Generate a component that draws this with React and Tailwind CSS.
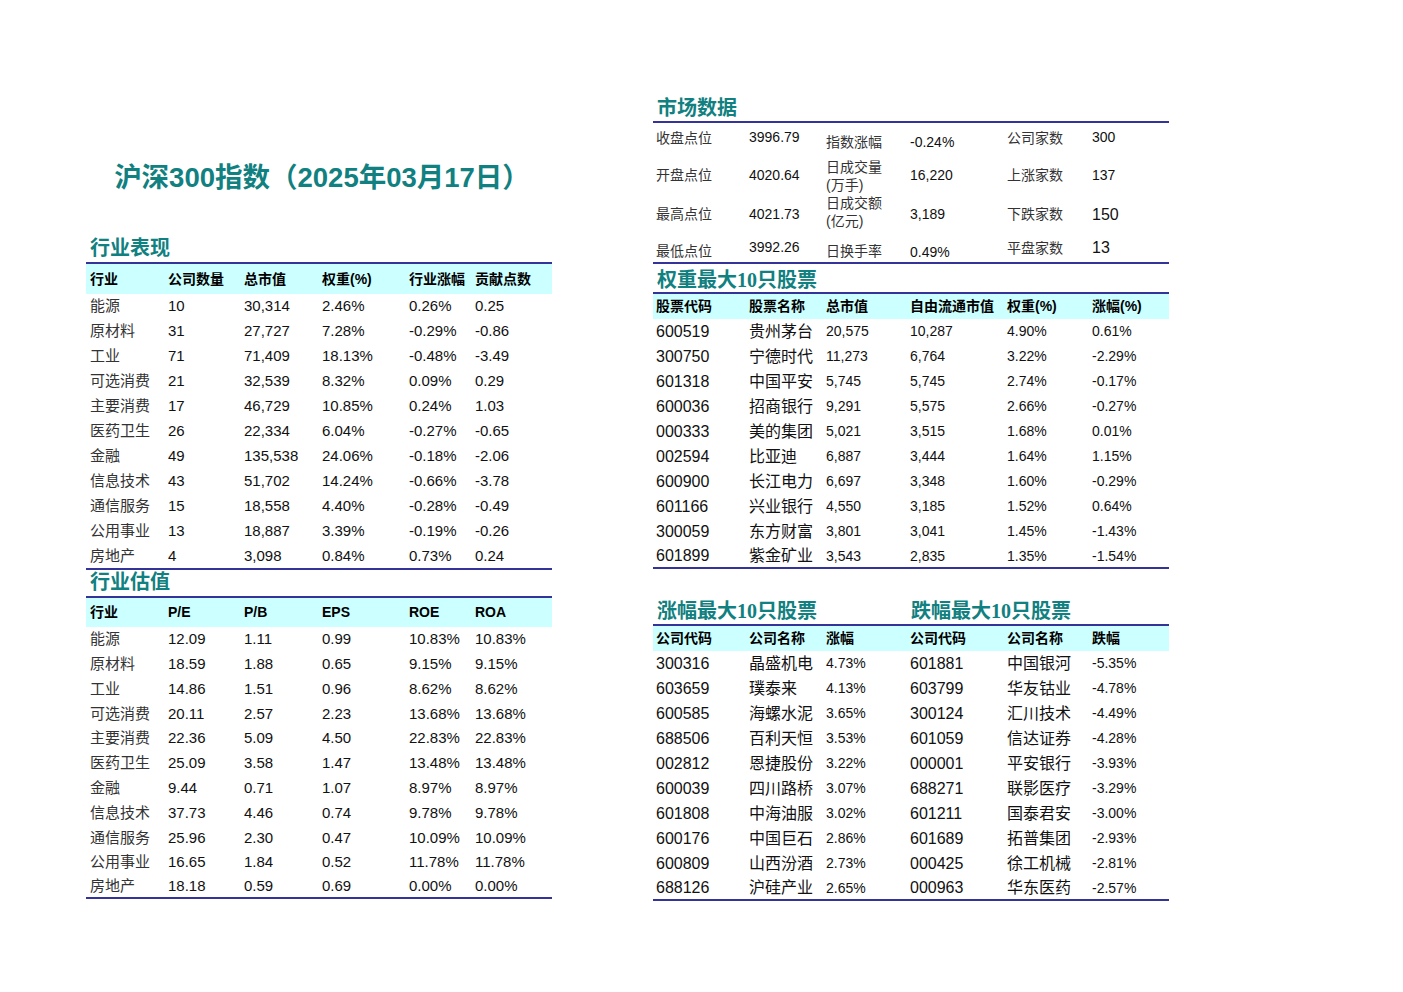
const sans = "font-['Liberation_Sans','Noto_Sans_CJK_SC',sans-serif]";
const head = "font-['Liberation_Serif','Noto_Sans_CJK_SC',serif] font-bold text-[20px] leading-[24px] text-[#108080]";

const LEFT_COLS = "grid grid-cols-[78px_76px_78px_87px_66px_1fr] pl-[4px]";
const RIGHT_COLS = "grid grid-cols-[93px_77px_84px_97px_85px_1fr] pl-[3px]";

const perf = [
  ["能源", "10", "30,314", "2.46%", "0.26%", "0.25"],
  ["原材料", "31", "27,727", "7.28%", "-0.29%", "-0.86"],
  ["工业", "71", "71,409", "18.13%", "-0.48%", "-3.49"],
  ["可选消费", "21", "32,539", "8.32%", "0.09%", "0.29"],
  ["主要消费", "17", "46,729", "10.85%", "0.24%", "1.03"],
  ["医药卫生", "26", "22,334", "6.04%", "-0.27%", "-0.65"],
  ["金融", "49", "135,538", "24.06%", "-0.18%", "-2.06"],
  ["信息技术", "43", "51,702", "14.24%", "-0.66%", "-3.78"],
  ["通信服务", "15", "18,558", "4.40%", "-0.28%", "-0.49"],
  ["公用事业", "13", "18,887", "3.39%", "-0.19%", "-0.26"],
  ["房地产", "4", "3,098", "0.84%", "0.73%", "0.24"],
];

const valuation = [
  ["能源", "12.09", "1.11", "0.99", "10.83%", "10.83%"],
  ["原材料", "18.59", "1.88", "0.65", "9.15%", "9.15%"],
  ["工业", "14.86", "1.51", "0.96", "8.62%", "8.62%"],
  ["可选消费", "20.11", "2.57", "2.23", "13.68%", "13.68%"],
  ["主要消费", "22.36", "5.09", "4.50", "22.83%", "22.83%"],
  ["医药卫生", "25.09", "3.58", "1.47", "13.48%", "13.48%"],
  ["金融", "9.44", "0.71", "1.07", "8.97%", "8.97%"],
  ["信息技术", "37.73", "4.46", "0.74", "9.78%", "9.78%"],
  ["通信服务", "25.96", "2.30", "0.47", "10.09%", "10.09%"],
  ["公用事业", "16.65", "1.84", "0.52", "11.78%", "11.78%"],
  ["房地产", "18.18", "0.59", "0.69", "0.00%", "0.00%"],
];

const weights = [
  ["600519", "贵州茅台", "20,575", "10,287", "4.90%", "0.61%"],
  ["300750", "宁德时代", "11,273", "6,764", "3.22%", "-2.29%"],
  ["601318", "中国平安", "5,745", "5,745", "2.74%", "-0.17%"],
  ["600036", "招商银行", "9,291", "5,575", "2.66%", "-0.27%"],
  ["000333", "美的集团", "5,021", "3,515", "1.68%", "0.01%"],
  ["002594", "比亚迪", "6,887", "3,444", "1.64%", "1.15%"],
  ["600900", "长江电力", "6,697", "3,348", "1.60%", "-0.29%"],
  ["601166", "兴业银行", "4,550", "3,185", "1.52%", "0.64%"],
  ["300059", "东方财富", "3,801", "3,041", "1.45%", "-1.43%"],
  ["601899", "紫金矿业", "3,543", "2,835", "1.35%", "-1.54%"],
];

const movers = [
  ["300316", "晶盛机电", "4.73%", "601881", "中国银河", "-5.35%"],
  ["603659", "璞泰来", "4.13%", "603799", "华友钴业", "-4.78%"],
  ["600585", "海螺水泥", "3.65%", "300124", "汇川技术", "-4.49%"],
  ["688506", "百利天恒", "3.53%", "601059", "信达证券", "-4.28%"],
  ["002812", "恩捷股份", "3.22%", "000001", "平安银行", "-3.93%"],
  ["600039", "四川路桥", "3.07%", "688271", "联影医疗", "-3.29%"],
  ["601808", "中海油服", "3.02%", "601211", "国泰君安", "-3.00%"],
  ["600176", "中国巨石", "2.86%", "601689", "拓普集团", "-2.93%"],
  ["600809", "山西汾酒", "2.73%", "000425", "徐工机械", "-2.81%"],
  ["688126", "沪硅产业", "2.65%", "000963", "华东医药", "-2.57%"],
];

function LeftTable({ header, rows, headH, rowH, lastH }) {
  return (
    <div>
      <div className={`${LEFT_COLS} ${headH} items-center bg-[#ccffff] text-[14px] font-bold text-black`}>
        {header.map((h) => (
          <span key={h}>{h}</span>
        ))}
      </div>
      {rows.map((r, i) => (
        <div
          key={r[0]}
          className={`${LEFT_COLS} items-center text-[15px] ${
            i === rows.length - 1 ? `${lastH} border-b-2 border-[#333399]` : rowH
          }`}
        >
          {r.map((c, j) => (
            <span key={j} className={j === 0 ? "text-[#333]" : "text-[#111]"}>
              {c}
            </span>
          ))}
        </div>
      ))}
    </div>
  );
}

const market = [
  {
    h: "h-[34px]",
    cells: [
      ["收盘点位", "pb-[4px]"],
      ["3996.79", "pb-[6px]"],
      ["指数涨幅", "pt-[4px]"],
      ["-0.24%", "pt-[4px]"],
      ["公司家数", "pb-[4px]"],
      ["300", "pb-[6px]"],
    ],
  },
  {
    h: "h-[37px]",
    cells: [
      ["开盘点位", ""],
      ["4020.64", ""],
      [["日成交量", "(万手)"], ""],
      ["16,220", ""],
      ["上涨家数", ""],
      ["137", ""],
    ],
  },
  {
    h: "h-[38px]",
    cells: [
      ["最高点位", ""],
      ["4021.73", ""],
      [["日成交额", "(亿元)"], "pb-[5px]"],
      ["3,189", ""],
      ["下跌家数", ""],
      ["150", "text-[16px]"],
    ],
  },
  {
    h: "h-[32px] border-b-2 border-[#333399]",
    cells: [
      ["最低点位", "pt-[8px]"],
      ["3992.26", "pt-[0px]"],
      ["日换手率", "pt-[8px]"],
      ["0.49%", "pt-[10px]"],
      ["平盘家数", "pt-[1px]"],
      ["13", "text-[16px]"],
    ],
  },
];

export default function App() {
  return (
    <div className={`${sans} w-[1403px] h-[992px] bg-white flex pl-[86px] text-[#111]`}>
      {/* left column */}
      <div className="w-[466px] pt-[158px]">
        <div className="h-[40px] flex items-center justify-center pl-[6px] text-[27.5px] font-bold text-[#108080]">
          沪深300指数（2025年03月17日）
        </div>
        <div className="h-[66px] flex items-end border-b-2 border-[#333399] pl-[4px] pb-[2px]">
          <span className={head}>行业表现</span>
        </div>
        <LeftTable
          header={["行业", "公司数量", "总市值", "权重(%)", "行业涨幅", "贡献点数"]}
          rows={perf}
          headH="h-[30px]"
          rowH="h-[25px]"
          lastH="h-[26px]"
        />
        <div className="h-[28px] flex items-end border-b-2 border-[#333399] pl-[4px] pb-[2px]">
          <span className={head}>行业估值</span>
        </div>
        <LeftTable
          header={["行业", "P/E", "P/B", "EPS", "ROE", "ROA"]}
          rows={valuation}
          headH="h-[29px]"
          rowH="h-[24.8px]"
          lastH="h-[24px]"
        />
      </div>

      {/* right column */}
      <div className="w-[516px] ml-[101px] pt-[93px]">
        <div className="h-[30px] flex items-end border-b-2 border-[#333399] pl-[4px] pb-[1px]">
          <span className={head}>市场数据</span>
        </div>
        {market.map((row, i) => (
          <div key={i} className={`${RIGHT_COLS} ${row.h} items-center text-[14px]`}>
            {row.cells.map(([c, cls], j) => (
              <div key={j} className={`${cls} ${j % 2 === 0 ? "text-[#333]" : "text-[#111]"}`}>
                {Array.isArray(c) ? (
                  <div className="leading-[18px]">
                    <div>{c[0]}</div>
                    <div>{c[1]}</div>
                  </div>
                ) : (
                  c
                )}
              </div>
            ))}
          </div>
        ))}

        <div className="h-[30px] flex items-end border-b-2 border-[#333399] pl-[4px] pb-[0px]">
          <span className={head}>权重最大10只股票</span>
        </div>
        <div className={`${RIGHT_COLS} h-[25px] items-center bg-[#ccffff] text-[14px] font-bold text-black`}>
          {["股票代码", "股票名称", "总市值", "自由流通市值", "权重(%)", "涨幅(%)"].map((h) => (
            <span key={h}>{h}</span>
          ))}
        </div>
        {weights.map((r, i) => (
          <div
            key={r[0]}
            className={`${RIGHT_COLS} h-[25px] items-center text-[14px] ${
              i === weights.length - 1 ? "border-b-2 border-[#333399]" : ""
            }`}
          >
            {r.map((c, j) => (
              <span key={j} className={j < 2 ? "text-[16px] text-[#111]" : ""}>
                {c}
              </span>
            ))}
          </div>
        ))}

        <div className="h-[57px] grid grid-cols-[254px_1fr] items-end border-b-2 border-[#333399] pl-[4px] pb-[1px]">
          <span className={head}>涨幅最大10只股票</span>
          <span className={head}>跌幅最大10只股票</span>
        </div>
        <div className={`${RIGHT_COLS} h-[25px] items-center bg-[#ccffff] text-[14px] font-bold text-black`}>
          {["公司代码", "公司名称", "涨幅", "公司代码", "公司名称", "跌幅"].map((h, j) => (
            <span key={j}>{h}</span>
          ))}
        </div>
        {movers.map((r, i) => (
          <div
            key={r[0]}
            className={`${RIGHT_COLS} h-[25px] items-center text-[14px] ${
              i === movers.length - 1 ? "border-b-2 border-[#333399]" : ""
            }`}
          >
            {r.map((c, j) => (
              <span key={j} className={j % 3 === 2 ? "" : "text-[16px] text-[#111]"}>
                {c}
              </span>
            ))}
          </div>
        ))}
      </div>
    </div>
  );
}
